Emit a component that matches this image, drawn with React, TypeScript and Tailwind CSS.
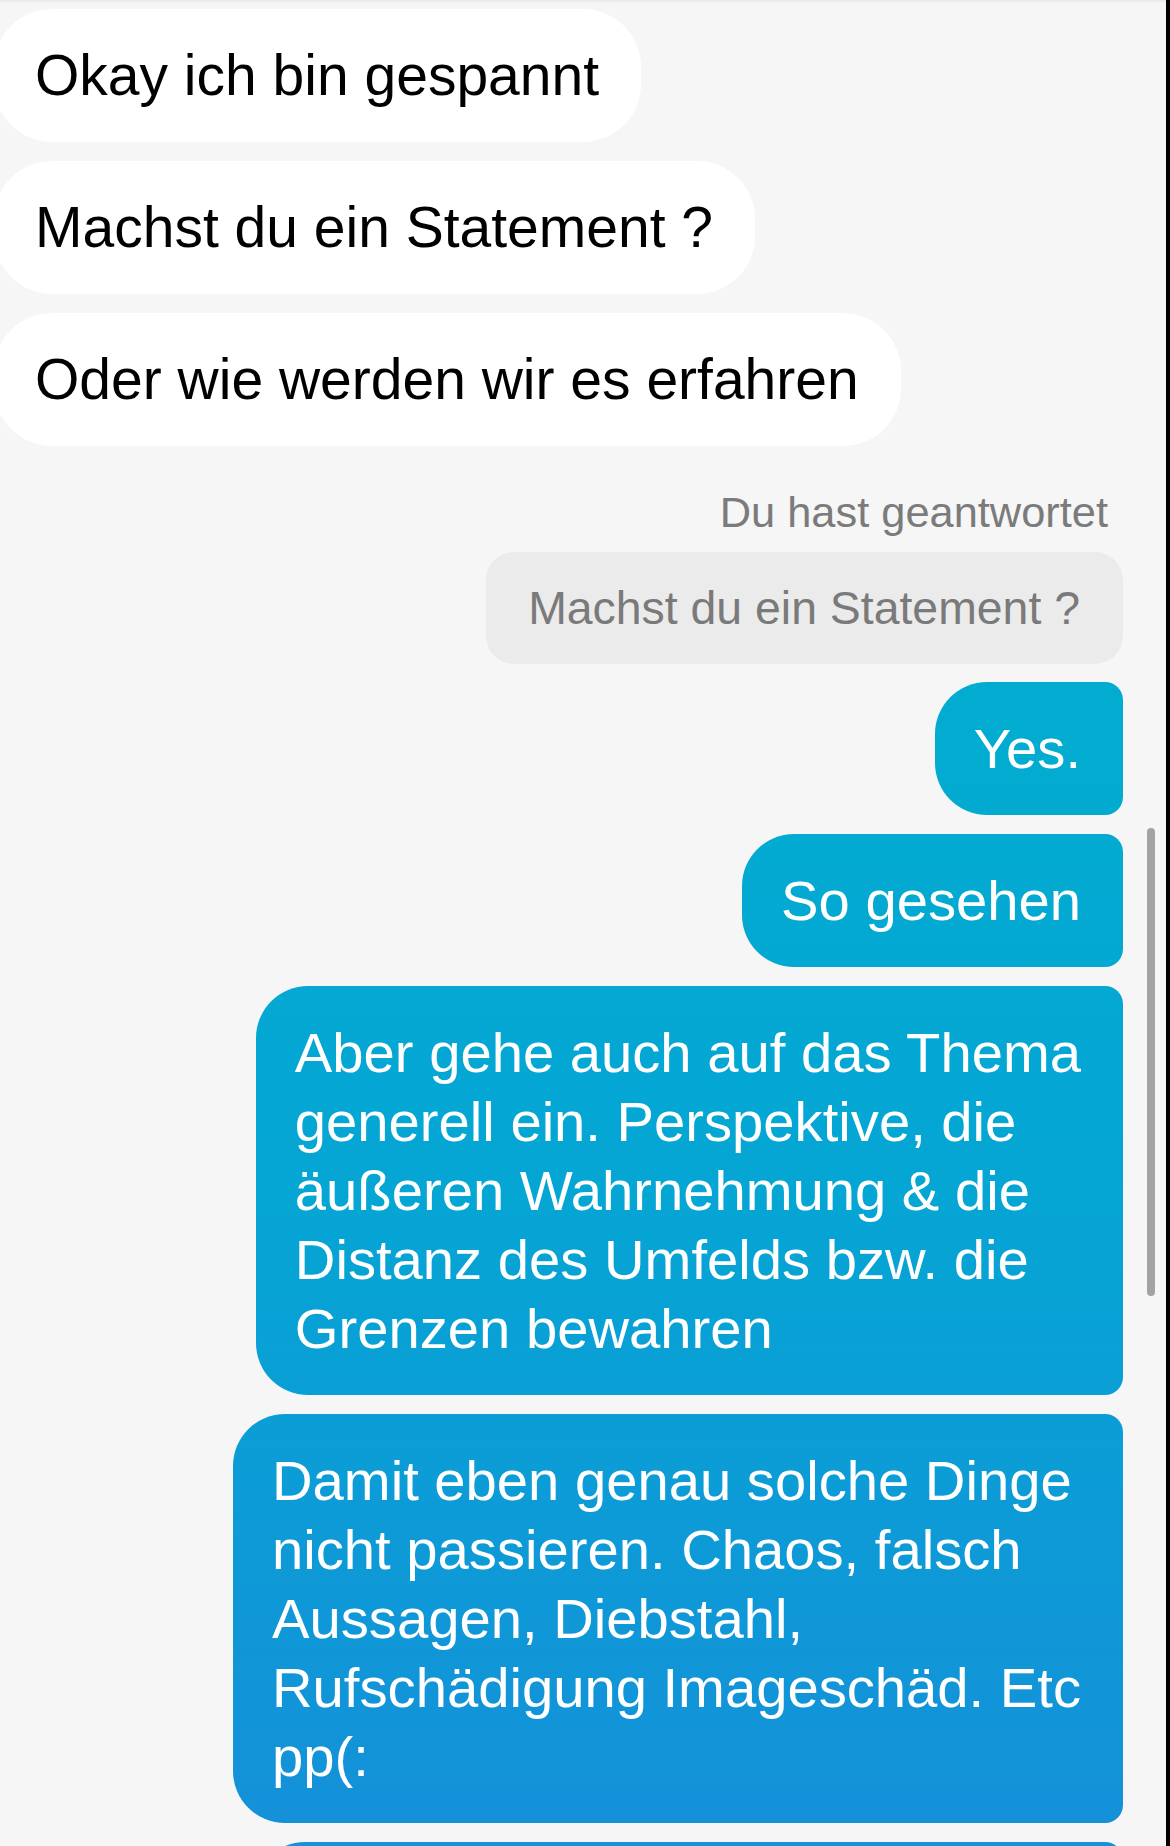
import React from 'react'

const font = { fontFamily: '"Liberation Sans", Arial, sans-serif' }

const blueBg =
  'bg-[linear-gradient(180deg,#00b3ce_0%,#02acd0_38%,#05a5d4_65%,#1590d9_100%)] bg-fixed'

interface IncomingProps {
  text: string
}

const Incoming = ({ text }: IncomingProps) => (
  <div className="flex">
    <div className="ml-[-6px] rounded-[58px] bg-white pl-[41px] pr-[42px] py-[32px] text-[57px] leading-[69px] text-black whitespace-nowrap">
      {text}
    </div>
  </div>
)

interface OutgoingProps {
  lines: string[]
}

const Outgoing = ({ lines }: OutgoingProps) => (
  <div className="flex justify-end">
    <div
      className={`${blueBg} rounded-l-[52px] rounded-r-[18px] pl-[39px] pr-[42px] py-[32px] text-[56.2px] leading-[69px] text-white whitespace-nowrap`}
    >
      {lines.map((line, i) => (
        <div key={i}>{line}</div>
      ))}
    </div>
  </div>
)

export default function App() {
  return (
    <div
      className="relative flex h-[1846px] w-[1170px] overflow-hidden bg-[#f6f6f6]"
      style={font}
    >
      <div className="flex flex-1 flex-col border-t-2 border-[#ececec] pt-[7px] pr-[43px]">
        <div className="-mr-[43px] flex flex-col gap-[19px]">
          <Incoming text="Okay ich bin gespannt" />
          <Incoming text="Machst du ein Statement ?" />
          <Incoming text="Oder wie werden wir es erfahren" />
        </div>

        <div className="mt-[40px] flex justify-end pr-[15px] text-[43.4px] leading-[52px] text-[#7b7b7b]">
          Du hast geantwortet
        </div>

        <div className="mt-[14px] flex justify-end">
          <div className="rounded-[28px] bg-[#ebebeb] pl-[42px] pr-[43px] py-[28px] text-[46.4px] leading-[56px] text-[#7a7a7a] whitespace-nowrap">
            Machst du ein Statement ?
          </div>
        </div>

        <div className="mt-[18px] flex flex-col gap-[19px]">
          <Outgoing lines={['Yes.']} />
          <Outgoing lines={['So gesehen']} />
          <Outgoing
            lines={[
              'Aber gehe auch auf das Thema',
              'generell ein. Perspektive, die',
              'äußeren Wahrnehmung & die',
              'Distanz des Umfelds bzw. die',
              'Grenzen bewahren',
            ]}
          />
          <Outgoing
            lines={[
              'Damit eben genau solche Dinge',
              'nicht passieren. Chaos, falsch',
              'Aussagen, Diebstahl,',
              'Rufschädigung Imageschäd. Etc',
              'pp(:',
            ]}
          />
          <div className="flex justify-end">
            <div className={`${blueBg} h-[133px] w-[870px] rounded-l-[52px] rounded-r-[18px]`} />
          </div>
        </div>
      </div>

      {/* scroll indicator */}
      <div className="absolute left-[1147px] top-[828px] h-[468px] w-[8px] rounded-full bg-[#a3a3a3]" />

      <div className="w-[4px] shrink-0 bg-black" />
    </div>
  )
}
